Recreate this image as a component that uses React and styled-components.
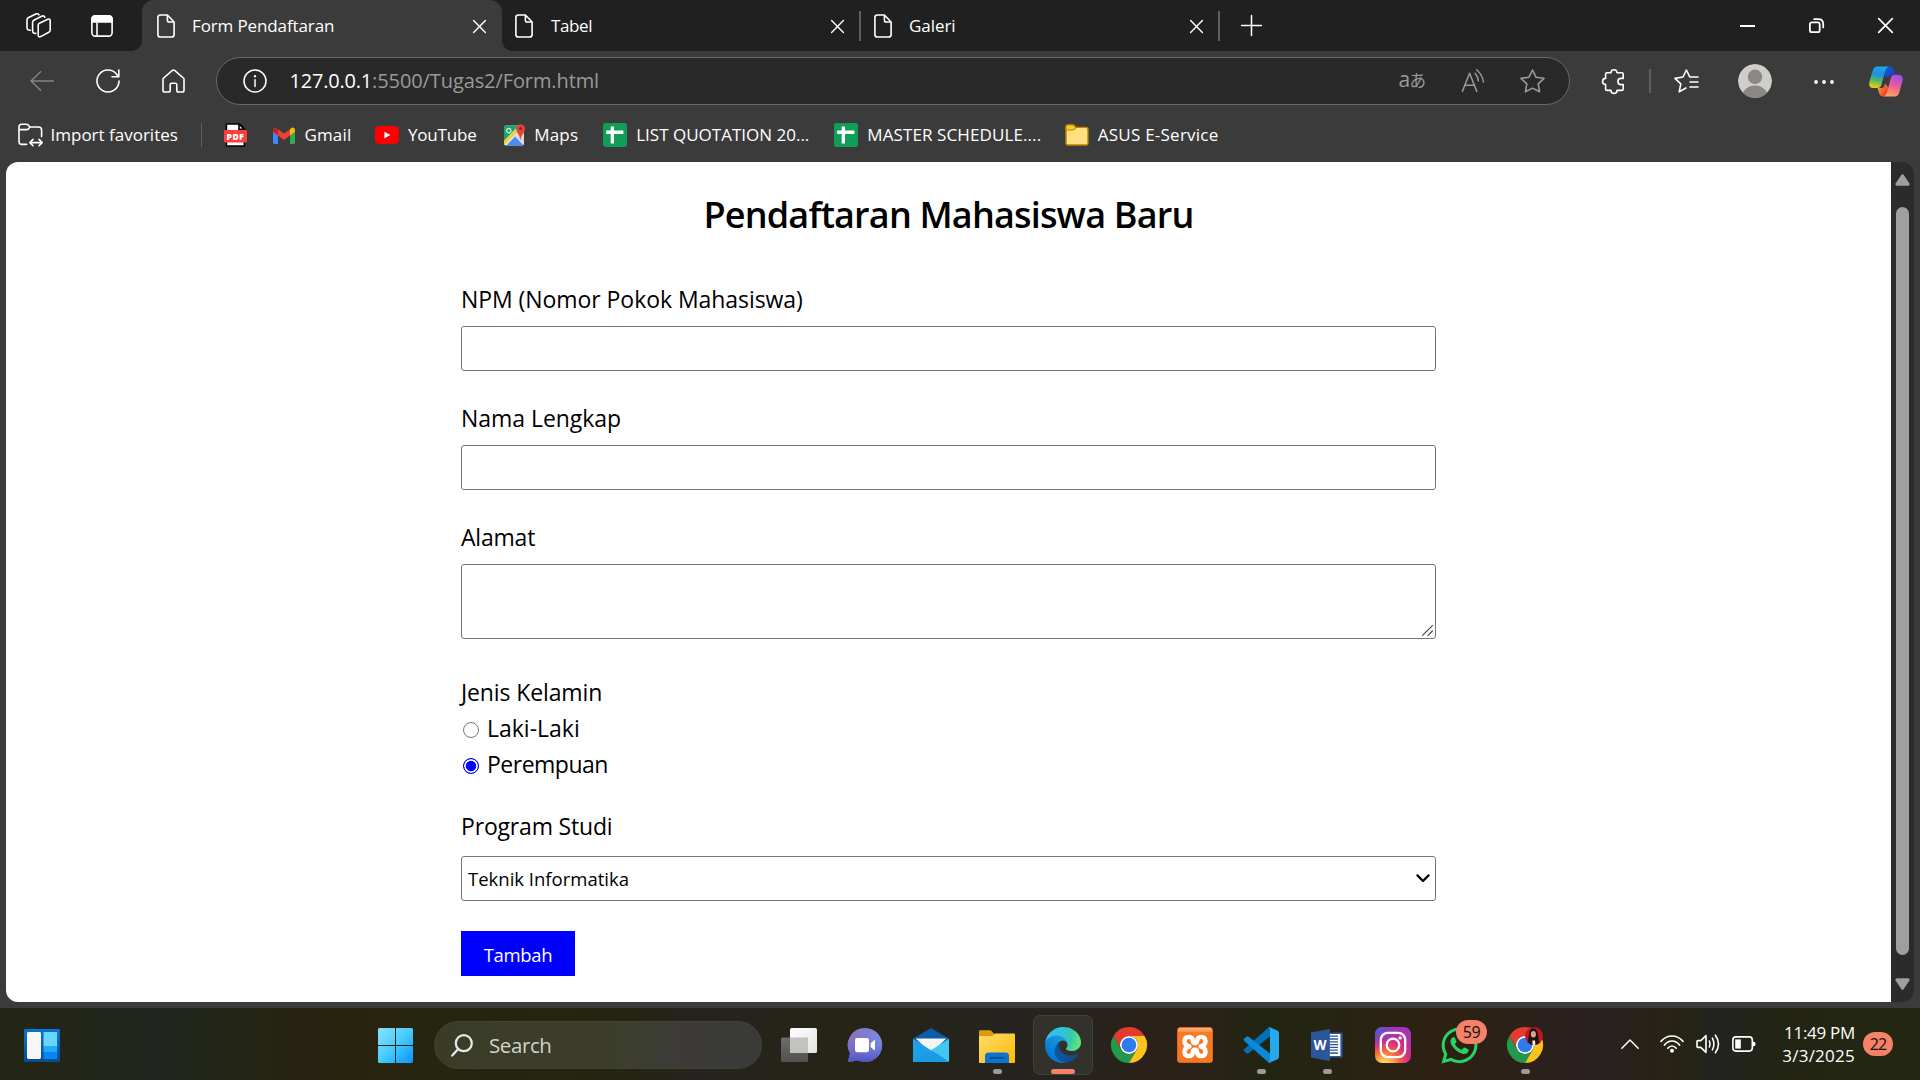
import React from "react";
import styled, { createGlobalStyle } from "styled-components";
import { FaWhatsapp } from "react-icons/fa";

const GlobalStyle = createGlobalStyle`
  *, *::before, *::after { box-sizing: border-box; }
  body { margin: 0; background: #3b3b3b; overflow: hidden; }
  svg { display: block; flex: none; }
`;

const Screen = styled.div`
  width: 1920px;
  height: 1080px;
  display: flex;
  flex-direction: column;
  background: #3b3b3b;
  font-family: "Open Sans", "Noto Sans", sans-serif;
  overflow: hidden;
`;

const Label = styled.span`
  flex: none;
  white-space: pre;
  color: ${(p) => p.$color || "#fff"};
  font-size: ${(p) => p.$size || 17}px;
  line-height: 24px;
  letter-spacing: ${(p) => p.$ls || 0}px;
  margin-left: ${(p) => p.$ml || 0}px;
`;

const Icon = styled.svg`
  width: ${(p) => p.$w}px;
  height: ${(p) => p.$h}px;
  margin-left: ${(p) => p.$ml || 0}px;
  margin-top: ${(p) => p.$mt || 0}px;
  fill: none;
  stroke: ${(p) => p.$stroke || "none"};
  stroke-width: ${(p) => p.$sw || 1.5};
  stroke-linecap: round;
  stroke-linejoin: round;
  overflow: visible;
`;

const Divider = styled.span`
  flex: none;
  width: ${(p) => p.$w || 1.5}px;
  height: ${(p) => p.$h}px;
  margin-left: ${(p) => p.$ml || 0}px;
  margin-right: ${(p) => p.$mr || 0}px;
  background: #5e5e5e;
`;

/* ---------- tab strip ---------- */
const TabStrip = styled.header`
  height: 51px;
  flex: none;
  display: flex;
  align-items: stretch;
  background: #202020;
`;

const StripTools = styled.div`
  width: 142px;
  display: flex;
  align-items: center;
  padding-left: 26px;
`;

const Tab = styled.div`
  position: relative;
  width: ${(p) => p.$w}px;
  display: flex;
  align-items: center;
  padding-left: ${(p) => p.$pl}px;
  padding-right: ${(p) => p.$pr}px;
  background: ${(p) => (p.$active ? "#3b3b3b" : "transparent")};
  border-radius: 12px 12px 0 0;

  ${(p) =>
    p.$active &&
    `
    &::before, &::after {
      content: "";
      position: absolute;
      bottom: 0;
      width: 10px;
      height: 10px;
    }
    &::before { left: -10px; background: radial-gradient(circle at 0 0, transparent 9.5px, #3b3b3b 10px); }
    &::after { right: -10px; background: radial-gradient(circle at 100% 0, transparent 9.5px, #3b3b3b 10px); }
  `}
`;

const NewTab = styled.div`
  display: flex;
  align-items: center;
`;

const Spacer = styled.span`
  flex: 1;
`;

const WindowControls = styled.div`
  display: flex;
  align-items: center;
  margin-left: auto;
  padding-right: 27px;
`;

/* ---------- toolbar ---------- */
const Toolbar = styled.div`
  height: 60px;
  flex: none;
  display: flex;
  align-items: center;
`;

const AddressBar = styled.div`
  width: 1354px;
  height: 48px;
  margin-left: 30.5px;
  padding: 0 24px 0 26px;
  display: flex;
  align-items: center;
  border: 1.5px solid #686868;
  border-radius: 24px;
  background: #292929;
`;

const TranslateGlyph = styled.span`
  color: #9a9a9a;
  font-size: 21px;
  line-height: 24px;
  white-space: pre;
  letter-spacing: -0.6px;
  margin-top: -3px;

  small {
    font-size: 16.5px;
    font-family: "Noto Sans CJK JP", sans-serif;
  }
`;

const Favorites = styled.nav`
  height: 51px;
  flex: none;
  display: flex;
  align-items: center;
  padding-left: 17.5px;
  padding-bottom: 3px;
`;

/* ---------- page ---------- */
const Viewport = styled.div`
  height: 840px;
  flex: none;
  display: flex;
  margin: 0 6px;
`;

const Page = styled.main`
  width: 1885px;
  background: #fff;
  border-radius: 12px 0 0 12px;
  display: flex;
  flex-direction: column;
  align-items: center;
  padding-top: 28px;
`;

const Heading = styled.h1`
  margin: 0 0 41px;
  font-size: 36px;
  font-weight: 600;
  line-height: 50px;
  letter-spacing: -0.82px;
  color: #000;
`;

const Form = styled.form`
  width: 975px;
  display: flex;
  flex-direction: column;
  align-items: flex-start;
`;

const FieldLabel = styled.label`
  display: block;
  height: 36px;
  line-height: 36px;
  font-size: 23px;
  letter-spacing: ${(p) => p.$ls || 0}px;
  color: #000;
  margin-top: ${(p) => p.$mt || 0}px;
  margin-bottom: ${(p) => (p.$mb === undefined ? 9 : p.$mb)}px;
`;

const Input = styled.input`
  display: block;
  width: 100%;
  height: 45px;
  border: 1px solid #767676;
  border-radius: 3px;
  background: #fff;
  outline: none;
`;

const AreaBox = styled.div`
  width: 100%;
  height: 75px;
  display: flex;
  align-items: flex-end;
  padding: 2px;
  border: 1px solid #767676;
  border-radius: 3px;
`;

const Area = styled.textarea`
  flex: 1;
  height: 100%;
  border: 0;
  padding: 0;
  resize: none;
  outline: none;
  background: transparent;
`;

const RadioRow = styled.div`
  height: 36px;
  display: flex;
  align-items: center;
  padding-left: 2px;
`;

const Radio = styled.input`
  appearance: none;
  width: 16px;
  height: 16px;
  margin: 3px 8px 0 0;
  border: 1.4px solid ${(p) => (p.defaultChecked ? "#0000ff" : "#767676")};
  border-radius: 50%;
  background: ${(p) => (p.defaultChecked ? "#0000ff" : "#fff")};
  box-shadow: ${(p) => (p.defaultChecked ? "inset 0 0 0 1.8px #fff" : "none")};
`;

const SelectBox = styled.div`
  width: 100%;
  height: 45px;
  display: flex;
  align-items: center;
  padding: 0 5px 0 6px;
  border: 1px solid #767676;
  border-radius: 3px;
`;

const Select = styled.select`
  flex: 1;
  appearance: none;
  border: 0;
  padding: 1px 0 0;
  background: transparent;
  font-family: inherit;
  font-size: 18.5px;
  line-height: 26px;
  color: #000;
`;

const SubmitButton = styled.button`
  width: 114px;
  height: 45px;
  margin-top: 30px;
  padding: 2px 0 0;
  border: 0;
  background: #0000ff;
  color: #fff;
  font-family: inherit;
  font-size: 18.5px;
  letter-spacing: -0.3px;
`;

const Scrollbar = styled.div`
  width: 23px;
  display: flex;
  flex-direction: column;
  align-items: center;
  padding: 12px 0 12px;
  background: #2b2b2b;
  border-radius: 0 12px 12px 0;
`;

const Thumb = styled.div`
  width: 13px;
  height: 749px;
  margin-top: 21px;
  margin-bottom: 23px;
  border-radius: 7px;
  background: #9f9f9f;
`;

/* ---------- taskbar ---------- */
const Taskbar = styled.footer`
  height: 72px;
  margin-top: 6px;
  flex: none;
  display: flex;
  background: linear-gradient(
    90deg,
    #242614 0,
    #22251a 90px,
    #20251f 150px,
    #242513 260px,
    #28220f 330px,
    #26260f 440px,
    #242410 620px,
    #25231f 700px,
    #262415 850px,
    #252420 1000px,
    #2b2119 1180px,
    #222512 1270px,
    #2e2113 1450px,
    #2b2118 1510px,
    #292021 1590px,
    #262413 1690px,
    #222321 1715px,
    #232512 1790px,
    #232712 1920px
  );
`;

const SearchPill = styled.div`
  width: 328px;
  height: 48px;
  margin-top: 13px;
  margin-left: 21px;
  padding-left: 16px;
  display: flex;
  align-items: center;
  border: 1px solid #41432f;
  border-radius: 24px;
  background: linear-gradient(90deg, #3a3c28 0, #3c3e2b 55%, #3c3b38 75%, #3a3a38 100%);
`;

const AppList = styled.div`
  display: flex;
  margin-left: 4px;
`;

const AppButton = styled.div`
  position: relative;
  width: 60px;
  height: 60px;
  margin: 7px 3px 0;
  padding-top: 11px;
  display: flex;
  flex-direction: column;
  align-items: center;
  border: 1.5px solid ${(p) => (p.$active ? "#40403a" : "transparent")};
  border-radius: 7px;
  background: ${(p) => (p.$active ? "#32312b" : "transparent")};
`;

const AppArt = styled.div`
  width: 36px;
  height: 36px;
  display: flex;
  align-items: center;
  justify-content: center;
`;

const RunMark = styled.span`
  width: ${(p) => (p.$active ? 24 : 9)}px;
  height: 5px;
  margin-top: 6px;
  border-radius: 3px;
  background: ${(p) => (p.$active ? "#f58168" : "#9c9c96")};
`;

const Badge = styled.span`
  display: grid;
  place-items: center;
  width: 31px;
  height: 24px;
  border-radius: 12px;
  background: #f58168;
  color: #111;
  font-size: 16px;
  line-height: 22px;
  letter-spacing: -0.3px;
`;

const FloatingBadge = styled(Badge)`
  position: absolute;
  top: 4px;
  left: 26px;
`;

const ClockBadge = styled(Badge)`
  width: 30px;
  margin-left: 8px;
  letter-spacing: -0.8px;
`;

const Tray = styled.div`
  flex: 1;
  display: flex;
  align-items: center;
  padding-left: 63px;
`;

const Clock = styled.div`
  width: 80px;
  margin-left: 19px;
  text-align: right;
  color: #fff;
  font-size: 17px;
  line-height: 23px;
  white-space: nowrap;
`;

const ClockLine = styled.div`
  letter-spacing: ${(p) => p.$ls}px;
`;

/* ---------- icons ---------- */
const PageIcon = () => (
  <Icon $w={18} $h={24} viewBox="0 0 18 24" $stroke="#fff" $sw={1.6}>
    <path d="M3.4 1H10.4L17.1 8V20.4Q17.1 23 14.6 23H3.4Q.9 23 .9 20.4V3.5Q.9 1 3.4 1ZM10.4 1V6.2Q10.4 8 12.2 8H17.1" />
  </Icon>
);

const CloseIcon = ({ ml, size = 13, sw = 1.4 }) => (
  <Icon $w={size} $h={size} $ml={ml} $mt={1} viewBox="0 0 13 13" $stroke="#fff" $sw={sw}>
    <path d="M.6.6L12.4 12.4M12.4.6L.6 12.4" />
  </Icon>
);

const SheetIcon = ({ ml }) => (
  <Icon $w={24} $h={24} $ml={ml} viewBox="0 0 24 24">
    <rect width="24" height="24" rx="2.4" fill="#0f9d58" />
    <path d="M7.7 3.4H11V7.6H20.4V11H11V20.6H7.7V11H3.2V7.6H7.7Z" fill="#fff" />
  </Icon>
);

const WorkspacesIcon = () => (
  <Icon $w={25} $h={25} viewBox="0 0 25 25" $stroke="#fff" $sw={1.6}>
    <path d="M13.4 10.2L21.8 6.2Q24.2 5.4 24.2 7.8V16.9Q24.2 18.4 22.8 19.2L14.6 23.6Q12.2 24.6 12.2 22V12Q12.2 10.8 13.4 10.2Z" />
    <path d="M9.8 20.4Q6.6 20.6 6.6 17.6V9.4Q6.6 8 7.8 7.3L15.6 3.2Q18 2.2 18.8 4.2" />
    <path d="M4.4 17.2Q1 17.4 1 14.4V6.8Q1 5.4 2.2 4.7L9.8 1Q12 .2 13 1.8" />
  </Icon>
);

const TabActionsIcon = () => (
  <Icon $w={22} $h={22} $ml={40} $mt={1} viewBox="0 0 22 22" $stroke="#fff" $sw={1.6}>
    <rect x=".9" y=".9" width="20.2" height="20.2" rx="3.4" />
    <path d="M1 7V4Q1 1 4 1H18Q21 1 21 4V7Z" fill="#fff" />
    <path d="M6 8V20" />
  </Icon>
);

const CopilotIcon = () => (
  <Icon $w={34} $h={31} $ml={35.5} viewBox="0 0 34 31">
    <defs>
      <linearGradient id="cpA" x1="0.5" y1="0" x2="0.3" y2="1">
        <stop offset="0" stopColor="#1ba7ee" />
        <stop offset=".35" stopColor="#1e90e0" />
        <stop offset=".65" stopColor="#4fb96a" />
        <stop offset="1" stopColor="#f5d10a" />
      </linearGradient>
      <linearGradient id="cpB" x1="0.7" y1="0" x2="0.4" y2="1">
        <stop offset="0" stopColor="#9a4df0" />
        <stop offset=".5" stopColor="#ee5a9c" />
        <stop offset="1" stopColor="#ffa65c" />
      </linearGradient>
      <linearGradient id="cpC" x1="0" y1="0" x2="1" y2="0.6">
        <stop offset="0" stopColor="#0f5fd8" />
        <stop offset="1" stopColor="#1a3fc0" />
      </linearGradient>
      <linearGradient id="cpD" x1="0" y1="0" x2="1" y2="0.6">
        <stop offset="0" stopColor="#ffab3f" />
        <stop offset="1" stopColor="#e8352c" />
      </linearGradient>
    </defs>
    <path d="M15 .5H21Q24 .5 25 4L26.2 8.5H22.5Q20.4 8.5 19.4 12L16 10Z" fill="url(#cpC)" />
    <path d="M8 22H13Q15 22 16 17.5L20 22L17 30.5H14.5Q11 30.5 10 27L8.6 22Z" fill="url(#cpD)" />
    <path d="M8.4.5H19.6Q17.4 1 16.4 4.5L12.4 18.8Q11.4 22 8.4 22H4.4Q-.8 22 .4 16L3.6 4.8Q5 .5 8.4 .5Z" fill="url(#cpA)" />
    <path d="M25.6 30.5H14.8Q17 30 18 26.5L21.8 12Q22.8 8.8 25.8 8.8H29.4Q34.6 8.8 33.6 14.4L30.4 26.2Q29 30.5 25.6 30.5Z" fill="url(#cpB)" />
  </Icon>
);

const ChromeLogo = ({ profile }) => (
  <Icon $w={36} $h={36} viewBox="0 0 36 36">
    <path d="M18 9H33.6A18 18 0 0 0 2.4 9L10.2 22.5A9 9 0 0 1 18 9Z" fill="#e33b2e" />
    <path d="M10.2 22.5L2.4 9A18 18 0 0 0 18 36L25.8 22.5A9 9 0 0 1 10.2 22.5Z" fill="#219a4b" />
    <path d="M25.8 22.5L18 36A18 18 0 0 0 33.6 9H18A9 9 0 0 1 25.8 22.5Z" fill="#fcc31e" />
    <circle cx="18" cy="18" r="9" fill="#fff" />
    <circle cx="18" cy="18" r="7.3" fill="#2f7bee" />
    {profile && (
      <g>
        <clipPath id="pf"><circle cx="27" cy="9" r="9" /></clipPath>
        <g clipPath="url(#pf)">
          <rect x="18" y="0" width="18" height="18" fill="#c4161c" />
          <path d="M21.5 18Q20.5 1.6 26.4 1.2Q31.4 1.4 31.6 14L33 18Z" fill="#1c1113" />
          <ellipse cx="26.4" cy="7.2" rx="2.5" ry="3.3" fill="#d9a48e" />
          <path d="M18 18Q20 12.6 26 13Q33 12.6 35 18Z" fill="#2b1420" />
          <path d="M25.4 13.6H28L28.4 18H25.6Z" fill="#f3eef0" />
        </g>
      </g>
    )}
  </Icon>
);

const EdgeLogo = () => (
  <Icon $w={36} $h={36} viewBox="0 0 256 256">
    <defs>
      <linearGradient id="egA" x1="60" y1="177" x2="241" y2="177" gradientUnits="userSpaceOnUse">
        <stop offset="0" stopColor="#0c59a4" />
        <stop offset="1" stopColor="#114a8b" />
      </linearGradient>
      <linearGradient id="egB" x1="150" y1="95" x2="45" y2="215" gradientUnits="userSpaceOnUse">
        <stop offset="0" stopColor="#1b9de2" />
        <stop offset=".3" stopColor="#1590df" />
        <stop offset="1" stopColor="#0078d4" />
      </linearGradient>
      <radialGradient id="egC" cx="25" cy="45" r="240" gradientUnits="userSpaceOnUse">
        <stop offset="0" stopColor="#35c1f1" />
        <stop offset=".4" stopColor="#2fc2df" />
        <stop offset=".68" stopColor="#36c8ac" />
        <stop offset="1" stopColor="#66eb6e" />
      </radialGradient>
    </defs>
    <path transform="translate(-4.63 -4.92)" fill="url(#egA)" d="M235.68 195.48a93.73 93.73 0 0 1-10.54 4.71 101.87 101.87 0 0 1-35.9 6.46c-47.32 0-88.54-32.55-88.54-74.32A31.48 31.48 0 0 1 117.13 105c-42.8 1.8-53.8 46.4-53.8 72.53 0 73.88 68.09 81.37 82.76 81.37 7.91 0 19.84-2.3 27-4.56l1.31-.44a128.34 128.34 0 0 0 66.6-52.8 4 4 0 0 0-5.32-5.62z" />
    <path fill="url(#egB)" d="M105.73 241.42a79.2 79.2 0 0 1-22.74-21.34 80.72 80.72 0 0 1 29.53-120c3.12-1.47 8.45-4.13 15.54-4a32.35 32.35 0 0 1 25.69 13 31.88 31.88 0 0 1 6.36 18.66c0-.21 24.46-79.6-80-79.6-43.9 0-80 41.66-80 78.21a130.15 130.15 0 0 0 12.11 56 128 128 0 0 0 156.38 67.11 75.55 75.55 0 0 1-62.78-8z" />
    <path fill="url(#egC)" d="M152.33 148.86c-.81 1.05-3.3 2.5-3.3 5.66 0 2.61 1.7 5.12 4.72 7.23 14.38 10 41.49 8.68 41.56 8.68a59.56 59.56 0 0 0 30.27-8.35 61.38 61.38 0 0 0 30.43-52.88c.26-22.41-8-37.31-11.34-43.91C223.46 23.84 177.72 0 128 0A128 128 0 0 0 0 126.2c.48-36.54 36.8-66.05 80-66.05 3.5 0 23.46.34 42 10.07 16.34 8.58 24.9 18.94 30.85 29.21 6.18 10.67 7.28 24.15 7.28 29.52s-2.74 13.33-7.8 19.91z" />
  </Icon>
);

const TaskViewLogo = () => (
  <Icon $w={36} $h={34} viewBox="0 0 36 34">
    <defs>
      <linearGradient id="tvA" x1="0" y1="0" x2="1" y2="1">
        <stop offset="0" stopColor="#fff" /><stop offset="1" stopColor="#e3e3e3" />
      </linearGradient>
      <linearGradient id="tvB" x1="0" y1="0" x2="0" y2="1">
        <stop offset="0" stopColor="#6b6b69" /><stop offset="1" stopColor="#525250" />
      </linearGradient>
    </defs>
    <rect x="0" y="9.5" width="27" height="24.5" rx="1.6" fill="url(#tvB)" />
    <rect x="9" y="0" width="27" height="25" rx="1.6" fill="url(#tvA)" />
    <rect x="9" y="9.5" width="18" height="15.5" fill="#c2c2c1" />
  </Icon>
);

const ChatLogo = () => (
  <Icon $w={34} $h={34} viewBox="0 0 34 34">
    <defs>
      <linearGradient id="chA" x1="0" y1="0.2" x2="1" y2="0.5">
        <stop offset="0" stopColor="#9568a8" /><stop offset=".5" stopColor="#7f7ccf" /><stop offset="1" stopColor="#7398f2" />
      </linearGradient>
      <linearGradient id="chB" x1="0" y1="0" x2="0" y2="1">
        <stop offset="0" stopColor="#8b8fe0" stopOpacity=".1" /><stop offset="1" stopColor="#5352c4" />
      </linearGradient>
    </defs>
    <path d="M17.2 0A17 17 0 1 1 9.6 32.2L1.8 34Q-.2 34.2 .3 32.2L2 25.4A17 17 0 0 1 17.2 0Z" fill="url(#chA)" />
    <path d="M17.2 0A17 17 0 1 1 9.6 32.2L1.8 34Q-.2 34.2 .3 32.2L2 25.4A17 17 0 0 1 17.2 0Z" fill="url(#chB)" />
    <rect x="7" y="10" width="14" height="14.3" rx="2.2" fill="#fff" />
    <path d="M22.6 15.4L26 12.2Q27 11.6 27 12.8V21.6Q27 22.8 26 22L22.6 19Z" fill="#fff" />
  </Icon>
);

const MailLogo = () => (
  <Icon $w={36} $h={34} viewBox="0 0 36 34">
    <path d="M18 0L36 10.8V20H0V10.8Z" fill="#0b5cab" />
    <path d="M2.6 10.6H33.4L18 25Z" fill="#f5f5f5" />
    <path d="M0 10.8L18 22.2L36 34H0Z" fill="#1e9fe6" />
    <path d="M36 10.8L18 22.2L36 34Z" fill="#3fc8f4" />
    <path d="M18 22.2L36 34H0Z" fill="#1a9be3" />
  </Icon>
);

const ExplorerLogo = () => (
  <Icon $w={36} $h={33} $mt={2} viewBox="0 0 36 33">
    <defs>
      <linearGradient id="exA" x1="0" y1="0" x2="1" y2="1">
        <stop offset="0" stopColor="#ffdc6e" /><stop offset="1" stopColor="#fdb900" />
      </linearGradient>
    </defs>
    <path d="M0 1.2Q0 .3 .9 .3H11Q12 .3 12.8 1.2L15.4 4H20V10H0Z" fill="#dd9a0a" />
    <path d="M0 6H12.5Q13.6 6 14.6 5L16 3.6H35Q36 3.6 36 4.6V32Q36 33 35 33H1Q0 33 0 32Z" fill="url(#exA)" />
    <path d="M6 33V26Q6 22.4 9.6 22.4H26.4Q30 22.4 30 26V33Z" fill="#0a74ce" />
    <path d="M11.4 27.8H24.6" stroke="#0a4c94" strokeWidth="1.8" />
  </Icon>
);

const VsCodeLogo = () => (
  <Icon $w={36} $h={36} viewBox="0 0 36 36">
    <path d="M1 24L3.4 26.2Q4.4 27 5.6 26.2L27 9.6V0L25 .9L1 22.2Q.2 23.2 1 24Z" fill="#0070b8" />
    <path d="M1 11.8L3.4 9.7Q4.4 9 5.6 9.7L27 26.4V36L25 35.1L1 13.8Q.2 12.8 1 11.8Z" fill="#0a8ad8" />
    <path d="M26 36Q25.4 35.8 25 35.1Q27 36 27 33.6V2.4Q27 0 25 .9Q25.6 0 26.8 .2L34.6 3.8Q36 4.4 36 6V30Q36 31.6 34.6 32.3Z" fill="#27a9f0" />
  </Icon>
);

const WordLogo = () => (
  <Icon $w={32} $h={32} viewBox="0 0 32 32">
    <rect x="17" y="3.4" width="14.6" height="25.2" rx="1" fill="#2b579a" />
    <rect x="18.4" y="5" width="11" height="22" fill="#fff" />
    <path d="M19 7.2H27M19 10H27M19 12.8H27M19 15.6H27M19 18.4H27M19 21.2H27M19 24H27" stroke="#2b579a" strokeWidth="1.3" strokeLinecap="butt" />
    <path d="M0 3.4L18.8 0V32L0 28.6Z" fill="#2b579a" />
    <text x="9" y="21" textAnchor="middle" fontFamily="Open Sans, sans-serif" fontWeight="700" fontSize="13.5" fill="#fff">W</text>
  </Icon>
);

const InstagramLogo = () => (
  <Icon $w={36} $h={36} viewBox="0 0 36 36">
    <defs>
      <radialGradient id="igA" cx=".27" cy="1.08" r="1.05">
        <stop offset="0" stopColor="#fee17a" /><stop offset=".15" stopColor="#fdc85a" /><stop offset=".42" stopColor="#f8613c" />
        <stop offset=".68" stopColor="#d32b86" /><stop offset="1" stopColor="#a634b4" />
      </radialGradient>
      <radialGradient id="igB" cx="-.05" cy="0" r=".7">
        <stop offset="0" stopColor="#3f62dc" /><stop offset=".35" stopColor="#4c5bd6" stopOpacity=".7" /><stop offset="1" stopColor="#8a3ac8" stopOpacity="0" />
      </radialGradient>
    </defs>
    <rect width="36" height="36" rx="7" fill="url(#igA)" />
    <rect width="36" height="36" rx="7" fill="url(#igB)" />
    <g stroke="#fff" strokeWidth="2.3">
      <rect x="5.8" y="5.8" width="24.4" height="24.4" rx="7" />
      <circle cx="18" cy="18" r="6.3" />
    </g>
    <circle cx="25.1" cy="10.9" r="1.7" fill="#fff" />
  </Icon>
);

const XamppTile = styled.div`
  width: 36px;
  height: 36px;
  display: flex;
  align-items: center;
  justify-content: center;
  border-radius: 3px;
  border: 1px solid #d9691e;
  background: linear-gradient(#fbb07c 0, #fb9a52 9%, #f87a24 13%, #f57722 100%);
`;

const XamppLogo = () => (
  <XamppTile>
    <Icon $w={26} $h={23} $mt={3} viewBox="1 1 26 24" $stroke="#fff" $sw={4.6}>
      <path d="M8.2 13Q2.8 11.6 3 7.2Q3.4 3 7.4 3Q11.6 3 11.8 7.4Q12 9.6 14 9.6Q16 9.6 16.2 7.4Q16.4 3 20.6 3Q24.6 3 25 7.2Q25.2 11.6 19.8 13Q25.2 14.4 25 18.8Q24.6 23 20.6 23Q16.4 23 16.2 18.6Q16 16.4 14 16.4Q12 16.4 11.8 18.6Q11.6 23 7.4 23Q3.4 23 3 18.8Q2.8 14.4 8.2 13Z" />
    </Icon>
  </XamppTile>
);

const apps = [
  { id: "taskview", art: <TaskViewLogo /> },
  { id: "chat", art: <ChatLogo /> },
  { id: "mail", art: <MailLogo /> },
  { id: "explorer", art: <ExplorerLogo />, running: true },
  { id: "edge", art: <EdgeLogo />, running: true, active: true },
  { id: "chrome", art: <ChromeLogo /> },
  { id: "xampp", art: <XamppLogo /> },
  { id: "vscode", art: <VsCodeLogo />, running: true },
  { id: "word", art: <WordLogo />, running: true },
  { id: "instagram", art: <InstagramLogo /> },
  { id: "whatsapp", art: <FaWhatsapp size={41} color="#25d366" />, badge: "59" },
  { id: "profile", art: <ChromeLogo profile />, running: true },
];

export default function App() {
  return (
    <Screen>
      <GlobalStyle />
      <TabStrip>
        <StripTools>
          <WorkspacesIcon />
          <TabActionsIcon />
        </StripTools>
        <Tab $active $w={360} $pl={15} $pr={16.5}>
          <PageIcon />
          <Label $ml={17} $ls={-0.12}>Form Pendaftaran</Label>
          <Spacer />
          <CloseIcon />
        </Tab>
        <Tab $w={357} $pl={13} $pr={15.5}>
          <PageIcon />
          <Label $ml={18} $ls={-0.4}>Tabel</Label>
          <Spacer />
          <CloseIcon />
        </Tab>
        <Tab $w={359} $pl={0} $pr={15.5}>
          <Divider $mr={13.5} $h={30} />
          <PageIcon />
          <Label $ml={17} $ls={-0.05}>Galeri</Label>
          <Spacer />
          <CloseIcon />
        </Tab>
        <NewTab>
          <Divider $h={30} />
          <Icon $w={21} $h={21} $ml={21.5} $mt={-1} viewBox="0 0 21 21" $stroke="#fff" $sw={1.5}>
            <path d="M10.5 .6V20.4M.6 10.5H20.4" />
          </Icon>
        </NewTab>
        <WindowControls>
          <Icon $w={15} $h={2} viewBox="0 0 15 2"><rect width="15" height="2" fill="#fff" /></Icon>
          <Icon $w={15} $h={15} $ml={54} viewBox="0 0 15 15" $stroke="#fff" $sw={1.8}>
            <rect x=".9" y="4.4" width="9.8" height="9.8" rx="2" />
            <path d="M5.2 1.2H9.2Q14.2 1.2 14.2 6.2V9.4" />
          </Icon>
          <Icon $w={15} $h={15} $ml={54} viewBox="0 0 13 13" $stroke="#fff" $sw={1.5}>
            <path d="M.6.6L12.4 12.4M12.4.6L.6 12.4" />
          </Icon>
        </WindowControls>
      </TabStrip>

      <Toolbar>
        <Icon $w={24} $h={20} $ml={30} viewBox="0 0 24 20" $stroke="#858585">
          <path d="M23.4 10H1M10.6 .8L1 10L10.6 19.2" />
        </Icon>
        <Icon $w={24} $h={24} $ml={42} viewBox="0 0 24 24" $stroke="#fff" $sw={1.6}>
          <path d="M23 12A11 11 0 1 1 20.8 5.4L22.6 7.6M22.8 1V7.8H16" />
        </Icon>
        <Icon $w={23} $h={24} $ml={42} viewBox="0 0 23 24" $stroke="#fff" $sw={1.6}>
          <path d="M1 10.6Q1 9.6 1.8 8.8L10.2 1.5Q11.5 .5 12.8 1.5L21.2 8.8Q22 9.6 22 10.6V21.2Q22 23 20.2 23H16.6Q14.8 23 14.8 21.2V15.6Q14.8 14.2 13.4 14.2H9.6Q8.2 14.2 8.2 15.6V21.2Q8.2 23 6.4 23H2.8Q1 23 1 21.2Z" />
        </Icon>
        <AddressBar>
          <Icon $w={24} $h={24} viewBox="0 0 24 24" $stroke="#fff" $sw={1.5}>
            <circle cx="12" cy="12" r="11" />
            <path d="M12 10.8V17.4" />
            <circle cx="12" cy="7.2" r="1.2" fill="#fff" stroke="none" />
          </Icon>
          <Label $ml={23} $size={20} $ls={-0.2}>127.0.0.1</Label>
          <Label $size={20} $ls={-0.1} $color="#9a9a9a">:5500/Tugas2/Form.html</Label>
          <Spacer />
          <TranslateGlyph>a<small>あ</small></TranslateGlyph>
          <Icon $w={24} $h={24} $ml={35} viewBox="0 0 24 24" $stroke="#9a9a9a" $sw={1.5}>
            <path d="M1.4 22.4L8.6 4.2L15.8 22.4M4 16.2H13.2" />
            <path d="M14.2 4.4Q17.2 7.6 17.4 12M15.6 .8Q21.6 6 22.4 13" />
          </Icon>
          <Icon $w={25} $h={24} $ml={35} viewBox="0 0 25 24" $stroke="#9a9a9a" $sw={1.6}>
            <path d="M12.5 1L16 8.2L24 9.3L18.2 14.9L19.6 22.8L12.5 19.1L5.4 22.8L6.8 14.9L1 9.3L9 8.2Z" />
          </Icon>
        </AddressBar>
        <Icon $w={23} $h={25} $ml={32} viewBox="0 0 23 25" $stroke="#fff" $sw={1.6}>
          <path d="M9 3.8A3 3 0 0 1 15 3.8H19.8Q21.2 3.8 21.2 5.2V9.4H19A3.1 3.1 0 0 0 19 15.6H21.2V20Q21.2 21.4 19.8 21.4H15A3 3 0 0 1 9 21.4H5Q3.6 21.4 3.6 20V15.4A3 3 0 0 1 3.6 9.4V5.2Q3.6 3.8 5 3.8Z" />
        </Icon>
        <Divider $ml={24} $h={24} $w={2} />
        <Icon $w={25} $h={24} $ml={23} viewBox="0 0 25 24" $stroke="#fff" $sw={1.6}>
          <path d="M15.8 8L12.4 1L9 8L1 9.4L6.8 14.8L5.2 22.8L12 19M16 13H24M16 18H24M15.8 8H24" />
        </Icon>
        <Icon $w={34} $h={34} $ml={39} viewBox="0 0 34 34">
          <clipPath id="av"><circle cx="17" cy="17" r="17" /></clipPath>
          <g clipPath="url(#av)">
            <circle cx="17" cy="17" r="17" fill="#d0cecb" />
            <circle cx="17" cy="12.8" r="7.2" fill="#8b8783" />
            <ellipse cx="17" cy="32" rx="12.5" ry="10.4" fill="#8b8783" />
          </g>
        </Icon>
        <Icon $w={20} $h={4} $ml={42} $mt={1} viewBox="0 0 20 4">
          <circle cx="2" cy="2" r="1.9" fill="#fff" />
          <circle cx="10" cy="2" r="1.9" fill="#fff" />
          <circle cx="18" cy="2" r="1.9" fill="#fff" />
        </Icon>
        <CopilotIcon />
      </Toolbar>

      <Favorites>
        <Icon $w={25} $h={24} viewBox="0 0 25 24" $stroke="#fff" $sw={1.6}>
          <path d="M8.6 21.4H4Q1 21.4 1 18.4V4Q1 1.2 3.6 1.2H8Q9.4 1.2 10.4 2.3L12 4Q10.8 6.6 8.6 6.6H1M12 4H20.6Q23.6 4 23.6 7V13.6" />
          <path d="M12 19.6H24M15 16.4L11.8 19.6L15 22.8M21 16.4L24.2 19.6L21 22.8" />
        </Icon>
        <Label $ml={8}>Import favorites</Label>
        <Divider $ml={23} $h={24} />
        <Icon $w={23} $h={24} $ml={22} viewBox="0 0 23 24">
          <path d="M2.4 1H15.4L20.4 6V23H2.4Z" fill="#fff" stroke="#000" strokeWidth="1.6" />
          <path d="M15 1V6.4H20.4Z" fill="#fff" stroke="#000" strokeWidth="1.6" />
          <rect y="7" width="23" height="12.6" rx="1" fill="#fb3f3f" />
          <text x="11.5" y="16.6" textAnchor="middle" fontFamily="Open Sans, sans-serif" fontWeight="800" fontSize="8.6" letterSpacing=".5" fill="#fff">PDF</text>
        </Icon>
        <Icon $w={22} $h={17} $ml={26} viewBox="0 0 22 17">
          <path d="M0 3V15.5Q0 17 1.5 17H5V7Z" fill="#4285f4" />
          <path d="M17 7V17H20.5Q22 17 22 15.5V3Z" fill="#34a853" />
          <path d="M17 2.2V8.6L22 4.8V3Q22 0 19 .5Z" fill="#fbbc04" />
          <path d="M5 2.2V8.6L0 4.8V3Q0 0 3 .5Z" fill="#c5221f" />
          <path d="M5 8.6V2.2L11 6.6L17 2.2V8.6L11 13Z" fill="#ea4335" />
        </Icon>
        <Label $ml={9} $ls={0.2}>Gmail</Label>
        <Icon $w={24} $h={18} $ml={23.5} viewBox="0 0 24 18">
          <rect width="24" height="18" rx="4.6" fill="#f00" />
          <path d="M9.4 5.8L15.4 9L9.4 12.2Z" fill="#fff" />
        </Icon>
        <Label $ml={9} $ls={-0.2}>YouTube</Label>
        <Icon $w={22} $h={22} $ml={27} viewBox="0 0 22 22">
          <clipPath id="mp"><rect y="1.6" width="20" height="20" rx="2" /></clipPath>
          <g clipPath="url(#mp)">
            <rect width="22" height="22" fill="#dfe3e6" />
            <path d="M0 0H16L0 17Z" fill="#1da362" />
            <path d="M2 22L11 12.6L20 22Z" fill="#4a8cf6" />
            <path d="M0 22V17L16 1L18 3L0 21.6Z" fill="#f6cf3e" />
            <path d="M12.4 12L20 4.8V21Z" fill="#d3d8db" />
          </g>
          <circle cx="4.8" cy="6.6" r="2.2" stroke="#cdeedd" strokeWidth="1.2" />
          <path d="M16.4 16Q16 11.6 13.2 8.4Q11 4.6 13 2Q16.4 -1.6 20 2Q22 4.6 19.8 8.4Q17 11.6 16.4 16Z" fill="#e4463a" />
          <circle cx="16.5" cy="4.6" r="1.7" fill="#8c2a22" />
        </Icon>
        <Label $ml={8.7} $ls={0.2}>Maps</Label>
        <SheetIcon ml={25} />
        <Label $ml={9}>LIST QUOTATION 20...</Label>
        <SheetIcon ml={25} />
        <Label $ml={9} $ls={0.1}>MASTER SCHEDULE....</Label>
        <Icon $w={24} $h={22} $ml={24} viewBox="0 0 24 22">
          <path d="M1 3Q1 1 3 1H7.4Q8.6 1 9.4 1.8L11 3.4H21Q23 3.4 23 5.4V19Q23 21 21 21H3Q1 21 1 19Z" fill="#ffdf80" stroke="#b98500" strokeWidth="1.4" />
          <path d="M1 6V3Q1 1 3 1H7.4Q8.6 1 9.4 1.8L11 3.4L9.4 5.2Q8.6 6 7.4 6Z" fill="#fcc92f" stroke="#b98500" strokeWidth="1.2" />
        </Icon>
        <Label $ml={8.5} $ls={0.24}>ASUS E-Service</Label>
      </Favorites>

      <Viewport>
        <Page>
          <Heading>Pendaftaran Mahasiswa Baru</Heading>
          <Form>
            <FieldLabel $ls={-0.06}>NPM (Nomor Pokok Mahasiswa)</FieldLabel>
            <Input type="text" />
            <FieldLabel $mt={29} $ls={-0.04}>Nama Lengkap</FieldLabel>
            <Input type="text" />
            <FieldLabel $mt={29} $ls={-0.2}>Alamat</FieldLabel>
            <AreaBox>
              <Area />
              <Icon $w={11} $h={11} viewBox="0 0 11 11" $stroke="#444" $sw={1.2}>
                <path d="M.6 10.4L10.4 .6M6 10.4L10.4 6" />
              </Icon>
            </AreaBox>
            <FieldLabel $mt={35} $mb={0} $ls={-0.12}>Jenis Kelamin</FieldLabel>
            <RadioRow>
              <Radio type="radio" name="jk" />
              <FieldLabel $mb={0}>Laki-Laki</FieldLabel>
            </RadioRow>
            <RadioRow>
              <Radio type="radio" name="jk" defaultChecked />
              <FieldLabel $mb={0} $ls={-0.5}>Perempuan</FieldLabel>
            </RadioRow>
            <FieldLabel $mt={26} $mb={12} $ls={-0.18}>Program Studi</FieldLabel>
            <SelectBox>
              <Select>
                <option>Teknik Informatika</option>
              </Select>
              <Icon $w={14} $h={9} viewBox="0 0 14 9" $stroke="#000" $sw={2.2}>
                <path d="M1.4 1.4L7 7L12.6 1.4" />
              </Icon>
            </SelectBox>
            <SubmitButton type="button">Tambah</SubmitButton>
          </Form>
        </Page>
        <Scrollbar>
          <Icon $w={15} $h={12} viewBox="0 0 15 12">
            <path d="M6.4 .8Q7.5 -.4 8.6 .8L14.4 9.6Q15.2 11.6 13.4 11.8H1.6Q-.2 11.6 .6 9.6Z" fill="#9f9f9f" />
          </Icon>
          <Thumb />
          <Icon $w={15} $h={12} viewBox="0 0 15 12">
            <path d="M6.4 11.2Q7.5 12.4 8.6 11.2L14.4 2.4Q15.2 .4 13.4 .2H1.6Q-.2 .4 .6 2.4Z" fill="#9f9f9f" />
          </Icon>
        </Scrollbar>
      </Viewport>

      <Taskbar>
        <Icon $w={36} $h={33} $ml={24} $mt={20.5} viewBox="0 0 36 33">
          <defs>
            <linearGradient id="wgA" x1="0" y1="0" x2="0" y2="1">
              <stop offset="0" stopColor="#0b74cf" /><stop offset="1" stopColor="#0b4a94" />
            </linearGradient>
          </defs>
          <rect width="36" height="33" rx="1.6" fill="url(#wgA)" />
          <rect x="3" y="3" width="14" height="27" rx="1.4" fill="#f6f6f6" />
          <rect x="19.5" y="3" width="13.6" height="14.6" fill="#68d6ff" />
          <rect x="19.5" y="17.6" width="13.6" height="6" fill="#1fa8ff" />
          <rect x="19.5" y="23.6" width="13.6" height="6.4" fill="#0a84ee" />
        </Icon>
        <Icon $w={35} $h={35} $ml={318} $mt={20} viewBox="0 0 35 35">
          <defs>
            <linearGradient id="wnA" x1="0" y1="0" x2="35" y2="35" gradientUnits="userSpaceOnUse">
              <stop offset="0" stopColor="#8ae0ff" /><stop offset=".5" stopColor="#45ccff" /><stop offset="1" stopColor="#0a92ff" />
            </linearGradient>
          </defs>
          <path d="M1 0H17V17H0V1ZM18 0H34L35 1V17H18ZM0 18H17V35H1L0 34ZM18 18H35V34L34 35H18Z" fill="url(#wnA)" />
        </Icon>
        <SearchPill>
          <Icon $w={22} $h={23} viewBox="0 0 22 23" $stroke="#e8e8e6" $sw={2.2}>
            <circle cx="12.8" cy="9.2" r="8" />
            <path d="M7 15.2L1.2 21.6" />
          </Icon>
          <Label $ml={16} $size={20.5} $color="#d2d3cb" $ls={-0.4}>Search</Label>
        </SearchPill>
        <AppList>
          {apps.map((a) => (
            <AppButton key={a.id} $active={a.active}>
              <AppArt>{a.art}</AppArt>
              {a.running && <RunMark $active={a.active} />}
              {a.badge && <FloatingBadge>{a.badge}</FloatingBadge>}
            </AppButton>
          ))}
        </AppList>
        <Tray>
          <Icon $w={18} $h={10} $mt={-1} viewBox="0 0 18 10" $stroke="#fff" $sw={1.5}>
            <path d="M.8 9.2L9 1L17.2 9.2" />
          </Icon>
          <Icon $w={24} $h={18} $ml={21} viewBox="0 0 24 18" $stroke="#fff" $sw={1.7}>
            <path d="M1 6.4Q5.6 1 12 1T23 6.4M4.4 10Q7.6 6 12 6T19.6 10M7.8 13.2Q9.6 11 12 11T16.2 13.2" />
            <circle cx="12" cy="15.8" r="2" fill="#fff" stroke="none" />
          </Icon>
          <Icon $w={24} $h={20} $ml={12} viewBox="0 0 24 20" $stroke="#fff" $sw={1.6}>
            <path d="M1 7.4Q1 6.6 1.8 6.6H4.8L10 1.6V18.4L4.8 13.4H1.8Q1 13.4 1 12.6Z" />
            <path d="M13.4 7Q14.8 10 13.4 13M16.4 4.2Q19.4 10 16.4 15.8M19.4 1.2Q25.6 10 19.4 18.8" />
          </Icon>
          <Icon $w={24} $h={16} $ml={12} viewBox="0 0 24 16" $stroke="#fff" $sw={1.6}>
            <rect x=".9" y=".9" width="19.4" height="14.2" rx="3" />
            <rect x="3.2" y="3.4" width="5.6" height="9.2" fill="#fff" stroke="none" />
            <path d="M21 5.4Q23.6 5.6 23.6 8T21 10.6Z" fill="#fff" stroke="none" />
          </Icon>
          <Clock>
            <ClockLine $ls={-0.3}>11:49 PM</ClockLine>
            <ClockLine $ls={0.25}>3/3/2025</ClockLine>
          </Clock>
          <ClockBadge>22</ClockBadge>
        </Tray>
      </Taskbar>
    </Screen>
  );
}
